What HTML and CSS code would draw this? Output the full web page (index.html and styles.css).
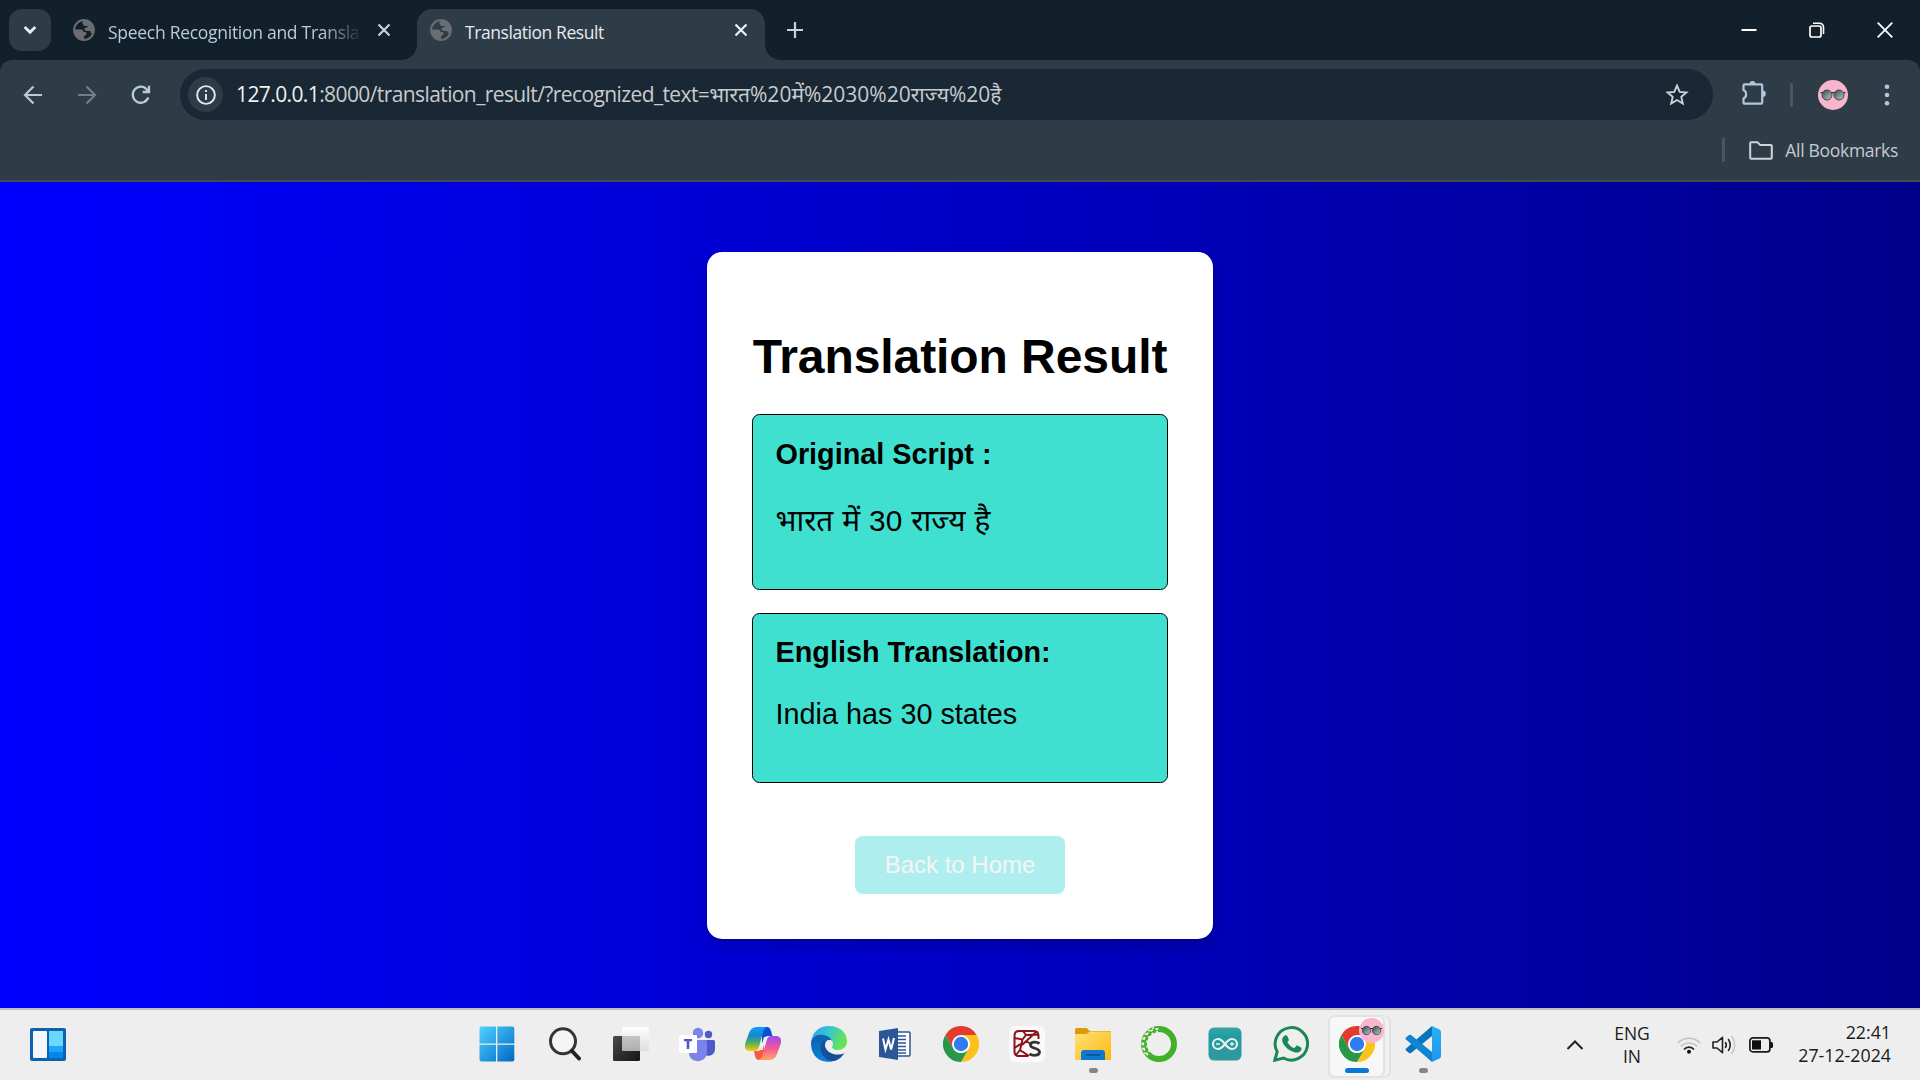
FILE: index.html
```html
<!DOCTYPE html>
<html lang="en">
<head>
<meta charset="utf-8">
<title>Translation Result</title>
<link rel="stylesheet" href="styles.css">
</head>
<body>
<svg class="defs" width="0" height="0" aria-hidden="true">
  <defs>
    <linearGradient id="win" x1="0" y1="0" x2="1" y2="1"><stop offset="0" stop-color="#4fd4ff"/><stop offset="1" stop-color="#0067c5"/></linearGradient>
    <linearGradient id="dark" x1="0" y1="0" x2="1" y2="1"><stop offset="0" stop-color="#4a4a4a"/><stop offset="1" stop-color="#151515"/></linearGradient>
    <linearGradient id="glass" x1="0" y1="0" x2="0" y2="1"><stop offset="0" stop-color="#fff" stop-opacity=".95"/><stop offset="1" stop-color="#ddd" stop-opacity=".85"/></linearGradient>
    <linearGradient id="copA" x1="0" y1="0" x2="0" y2="1"><stop offset="0" stop-color="#0aa0f5"/><stop offset=".35" stop-color="#1586d6"/><stop offset=".65" stop-color="#4cb060"/><stop offset="1" stop-color="#ffc800"/></linearGradient>
    <linearGradient id="copB" x1="0" y1="0" x2="0" y2="1"><stop offset="0" stop-color="#9b4df0"/><stop offset=".5" stop-color="#f2559a"/><stop offset="1" stop-color="#ffa860"/></linearGradient>
    <linearGradient id="edgeA" x1="0" y1="0" x2="1" y2=".3"><stop offset="0" stop-color="#2a9de8"/><stop offset=".5" stop-color="#35c5d5"/><stop offset="1" stop-color="#66e552"/></linearGradient>
    <linearGradient id="edgeB" x1="0" y1="0" x2="0" y2="1"><stop offset="0" stop-color="#0f5fa8"/><stop offset="1" stop-color="#0a84dc"/></linearGradient>
    <linearGradient id="fold" x1="0" y1="0" x2="1" y2="1"><stop offset="0" stop-color="#ffe27a"/><stop offset="1" stop-color="#fbb80e"/></linearGradient>
    <linearGradient id="ard" x1="0" y1="0" x2="0" y2="1"><stop offset="0" stop-color="#3aa5a8"/><stop offset=".3" stop-color="#1f9ba0"/><stop offset="1" stop-color="#32989d"/></linearGradient>
    <linearGradient id="lens" x1="0" y1="0" x2="1" y2="1"><stop offset="0" stop-color="#33464a"/><stop offset="1" stop-color="#b9cdcf"/></linearGradient>
    <linearGradient id="vs" x1="0" y1="0" x2="0" y2="1"><stop offset="0" stop-color="#27b0f5"/><stop offset="1" stop-color="#2196ee"/></linearGradient>
    <symbol id="globe" viewBox="0 0 22 22">
      <circle cx="11" cy="11" r="9.9" fill="none" stroke="#6b6d70" stroke-width="2"/>
      <path fill="#6b6d70" d="M12 1.2c5 0 9 4.400 8.800 9.800-.2 2-1 3-2 3.600-1.200-.3-1-2-2-2.600H12.800l-1.500-1.700c0-1 1-1.700 2.400-1.700 1 0 1.200-1 1-1.700h-3.400c-1-.5-1-2-2-2.500 0-1.200.6-2.500 2.700-3.200zM1.500 10.500h6.700c1.500.2 2.200 1 2.300 2.500h2c1.300.3 1.500 2 .5 2.800l-2 1.400v3.300C5.600 20.600 1.500 16.500 1.500 10.500z"/>
    </symbol>
    <symbol id="glasses" viewBox="0 0 30 30">
      <circle cx="15" cy="15" r="15" fill="#f9b5ce"/>
      <path d="M2.500 12.600h25M12.500 13.500q2.500-1.700 5 0" stroke="#333" stroke-width="1.300" fill="none"/>
      <circle cx="9" cy="15" r="5" fill="url(#lens)" stroke="#444" stroke-width="1"/>
      <circle cx="21" cy="15" r="5" fill="url(#lens)" stroke="#444" stroke-width="1"/>
    </symbol>
    <symbol id="chrome" viewBox="0 0 36 36">
      <path fill="#e33b2e" d="M2.400 9A18 18 0 0 1 33.600 9H18L10.200 22.500z"/>
      <path fill="#fcc21b" d="M33.600 9A18 18 0 0 1 18 36l7.800-13.500L18 9z"/>
      <path fill="#279847" d="M18 36A18 18 0 0 1 2.400 9l7.800 13.500A9 9 0 0 0 25.800 22.500z"/>
      <circle cx="18" cy="18" r="9" fill="#fff"/><circle cx="18" cy="18" r="7.200" fill="#2f7cf0"/>
    </symbol>
  </defs>
</svg>

<header class="browser">
  <div class="tabstrip">
    <button class="tab-search"><svg width="14" height="10" viewBox="0 0 14 10"><path d="M1.700 2L7 7.200 12.300 2" fill="none" stroke="#e9eef2" stroke-width="2.800"/></svg></button>
    <div class="tab">
      <svg class="favicon" width="22" height="22"><use href="#globe"/></svg>
      <span class="tab-title fade">Speech Recognition and Transla</span>
      <svg class="close" width="14" height="14" viewBox="0 0 14 14"><path d="M1.500 1.500l11 11m0-11l-11 11" stroke="#c3d4e0" stroke-width="2.200"/></svg>
    </div>
    <div class="tab active">
      <svg class="favicon" width="22" height="22"><use href="#globe"/></svg>
      <span class="tab-title">Translation Result</span>
      <svg class="close" width="14" height="14" viewBox="0 0 14 14"><path d="M1.500 1.500l11 11m0-11l-11 11" stroke="#f0f2f4" stroke-width="2.200"/></svg>
    </div>
    <svg class="new-tab" width="16" height="16" viewBox="0 0 16 16"><path d="M8 0v16M0 8h16" stroke="#c3d4e0" stroke-width="2.200"/></svg>
    <div class="window-controls">
      <svg width="16" height="16" viewBox="0 0 16 16"><path d="M.5 8h15" stroke="#fff" stroke-width="2"/></svg>
      <svg width="16" height="16" viewBox="0 0 16 16"><rect x="1" y="4" width="11" height="11" rx="2" fill="none" stroke="#fff" stroke-width="1.700"/><path d="M4 1.200h6.500a4 4 0 0 1 4 4V12" fill="none" stroke="#fff" stroke-width="1.600"/></svg>
      <svg width="16" height="16" viewBox="0 0 16 16"><path d="M.7.700l14.600 14.600m0-14.600L.7 15.300" stroke="#fff" stroke-width="1.800"/></svg>
    </div>
  </div>
  <div class="toolbar">
    <div class="nav">
      <svg width="20" height="20" viewBox="0 0 20 20"><path d="M19 10H2m8.500-8.500L2 10l8.500 8.500" fill="none" stroke="#b8cbd9" stroke-width="2.200"/></svg>
      <svg width="20" height="20" viewBox="0 0 20 20"><path d="M1 10h17M9.500 1.500L18 10l-8.500 8.500" fill="none" stroke="#6f7f8b" stroke-width="2.200"/></svg>
      <svg width="20" height="20" viewBox="0 0 20 20"><path d="M17.300 12.500A8 8 0 1 1 15.800 4.400L18 6.600M18 .8V7h-6.300" fill="none" stroke="#b8cbd9" stroke-width="2.300"/></svg>
    </div>
    <div class="omnibox">
      <span class="site-info"><svg width="20" height="20" viewBox="0 0 20 20"><circle cx="10" cy="10" r="8.900" fill="none" stroke="#e3e8ec" stroke-width="1.900"/><path d="M10 9v6M10 5v2" stroke="#e3e8ec" stroke-width="1.900"/></svg></span>
      <span class="url"><span class="host">127.0.0.1</span><span class="path">:8000/translation_result/?recognized_text=</span><span class="query">भारत%20में%2030%20राज्य%20है</span></span>
      <svg class="star" width="24" height="24" viewBox="0 0 24 24"><path d="M12 2.700l2.700 6.200 6.700.6-5.100 4.400 1.500 6.600-5.800-3.500-5.800 3.500 1.500-6.600-5.100-4.400 6.700-.6z" fill="none" stroke="#cdd2d6" stroke-width="1.900"/></svg>
    </div>
    <div class="actions">
      <svg class="puzzle" width="25" height="26" viewBox="0 0 25 26"><path fill="none" stroke="#b3c7dc" stroke-width="2.200" stroke-linejoin="round" d="M2.500 5.500q0-1.200 1.200-1.200H20q1.200 0 1.200 1.200v17q0 1.200-1.200 1.200H3.700q-1.200 0-1.200-1.200v-4.300c3.500-.8 3.500-7.200 0-8z"/><path fill="#b3c7dc" d="M8.500 4a3 3 0 0 1 6 0zM21.500 10.500a3.300 3.300 0 0 1 0 6.600z"/></svg>
      <i class="divider"></i>
      <svg class="avatar" width="30" height="30"><use href="#glasses"/></svg>
      <svg class="dots" width="6" height="22" viewBox="0 0 6 22"><g fill="#b3c7dc"><circle cx="3" cy="2.800" r="2.300"/><circle cx="3" cy="11" r="2.300"/><circle cx="3" cy="19.300" r="2.300"/></g></svg>
    </div>
  </div>
  <div class="bookmarks">
    <i class="divider"></i>
    <svg width="24" height="19" viewBox="0 0 24 19"><path d="M1.200 2.200q0-1 1-1h6.300l2.800 2.900h10.500q1 0 1 1V16.800q0 1-1 1H2.200q-1 0-1-1z" fill="none" stroke="#d0d3d6" stroke-width="2"/></svg>
    <span>All Bookmarks</span>
  </div>
</header>

<main class="page">
  <section class="card">
    <h1>Translation Result</h1>
    <div class="result original">
      <h2>Original Script :</h2>
      <p class="hindi">भारत में 30 राज्य है</p>
    </div>
    <div class="result english">
      <h2>English Translation:</h2>
      <p>India has 30 states</p>
    </div>
    <a class="home">Back to Home</a>
  </section>
</main>

<footer class="taskbar">
  <svg class="widgets" width="36" height="33" viewBox="0 0 36 33"><rect width="36" height="33" rx="2" fill="#0a62b0"/><rect x="3" y="3" width="14" height="27" rx="1" fill="#f4f6f9"/><path fill="#68d8ff" d="M19 3h14v15H19z"/><path fill="#1ba5fb" d="M19 18h14v6H19z"/><path fill="#0686ec" d="M19 24h14v6H19z"/></svg>
  <nav class="apps">
    <span class="app start"><svg width="36" height="36" viewBox="0 0 36 36"><path fill="url(#win)" d="M2.500.5H17v17H.5v-15a2 2 0 0 1 2-2zM18.300.5h15a2 2 0 0 1 2 2v15h-17zM.5 18.800H17v16.700H2.500a2 2 0 0 1-2-2zM18.300 18.800h17v14.700a2 2 0 0 1-2 2h-15z"/></svg></span>
    <span class="app"><svg width="36" height="36" viewBox="0 0 36 36"><circle cx="16" cy="15.300" r="12.500" fill="#f5f5f5" stroke="#353535" stroke-width="3"/><path d="M25 25l7 7.500" stroke="#222" stroke-width="4" stroke-linecap="round"/></svg></span>
    <span class="app"><svg width="36" height="36" viewBox="0 0 36 36"><rect y="10" width="27" height="25" rx="1.500" fill="url(#dark)"/><rect x="9" y="1" width="27" height="24" rx="1.500" fill="url(#glass)"/><path fill="#8c8c8c" opacity=".35" d="M9 10h18v15H9z"/></svg></span>
    <span class="app"><svg width="36" height="36" viewBox="0 0 36 36"><circle cx="29.500" cy="8.500" r="3.700" fill="#5059c9"/><path fill="#5059c9" d="M25 14h9.500q1.500 0 1.500 1.500V23c0 9-13 9-13 0z"/><circle cx="19" cy="7" r="5.200" fill="#7b83eb"/><path fill="#7b83eb" d="M10 14h16q2 0 2 2v10c0 12-18 12-18 1z"/><rect y="9" width="18" height="18" rx="1" fill="#fff"/><path fill="#5059c9" d="M5 13h8v2.300h-2.700V23H7.700v-7.700H5z"/></svg></span>
    <span class="app"><svg width="36" height="36" viewBox="0 0 36 36"><path fill="#0a50d2" d="M17 1h5q3 0 4 4l1.500 5H23q-3 0-4 3l-2 5z"/><path fill="#f65b42" d="M9 25h5l5-8v13l-2 4h-3q-3 0-4-4z"/><path fill="url(#copA)" d="M12 1h10q-3 1-4 5l-4 15q-1 4-5 4H5c-4 0-6-3-5-7L4 7q2-6 8-6z"/><path fill="url(#copB)" d="M24 34H13.500q3-1 4-5l4-14q1-5 5-5H31c4 0 6 3 5 7l-4 11q-2 6-8 6z"/><path fill="#eee" d="M19 11h4q-2 1-3 4l-2.500 9h-4q2-1 3-4z"/></svg></span>
    <span class="app"><svg width="36" height="36" viewBox="0 0 36 36"><path fill="url(#edgeA)" d="M0 17C1 6 8 0 18 0c11 0 18 7 18 15 0 6-4 9-10 9-4 0-6-1-5-3 2-3 0-8-4-8z"/><path fill="url(#edgeB)" d="M0 17C1 11 6 8 12 9c7 1 10 5 9 10-1-5-5-6-7-2-2 8 3 16 10 17.500-3 1.500-7 1.500-10 1C5 34 0 27 0 17z"/><path fill="#12509c" d="M11 16c-4 8 2 20 12 19 4-.6 8-4 10.500-8-8 4-18 0-19-6.500-.3-2 .3-4 1.500-5-2-1-4-.5-5 .5z"/><path fill="#eee" d="M14 19c0-3 2-5 4.500-5s4 2 3 5c-1.500 4 2 5 6 5.500 3 .3 5-.5 6-.3s1 1.500 0 2.300c-3 1.500-8 2-12 .5s-7.500-4.500-7.500-8z"/></svg></span>
    <span class="app"><svg width="36" height="36" viewBox="0 0 36 36"><rect x="19" y="6" width="14" height="24" rx="1" fill="#fff" stroke="#2b5797" stroke-width="1.500"/><path d="M20 10h9m-9 3.500h9m-9 3.500h9m-9 3.500h9m-9 3.500h9m-9 3h9" stroke="#2b5797" stroke-width="1.500"/><path fill="#2b5797" d="M2 5l19-3v32L2 31z"/><path d="M6 12.500l2.500 11 3-10 2.600 10L17 12" fill="none" stroke="#fff" stroke-width="2"/></svg></span>
    <span class="app"><svg width="36" height="36"><use href="#chrome"/></svg></span>
    <span class="app"><svg width="36" height="36" viewBox="0 0 36 36"><rect width="36" height="36" rx="6" fill="#fafafa"/><path d="M19 30H10q-4.500 0-4.500-4.500V10Q5.500 5 10 5h15q4.500 0 4.500 5v3M5.500 12l8 1.500L17 9l12-.5M17 9l-3-4M13.500 13.500L11 24l9 6M5.500 22l6-4M11 24l-4 5M13 19l14-13M17 15l5 3" fill="none" stroke="#8b1219" stroke-width="2"/><path d="M30.500 17.500c-3-2-9-2-9 1.500 0 4 9 2.500 9 7 0 4-7 4-10 1.800" fill="none" stroke="#333" stroke-width="2.800"/></svg></span>
    <span class="app running"><svg width="36" height="36" viewBox="0 0 36 36"><path fill="#dc9a08" d="M1.500 2h10L15 5h20q1 0 1 1v6H0V3.500Q0 2 1.500 2z"/><path fill="url(#fold)" d="M0 8h11.500L15 5.500h20q1 0 1 1V34H0z"/><path fill="#0b79cd" d="M6 34v-7q0-3 3-3h18q3 0 3 3v7z"/><path d="M11 29h14" stroke="#07549c" stroke-width="2"/></svg></span>
    <span class="app"><svg width="36" height="36" viewBox="0 0 36 36"><circle cx="18" cy="18" r="15" fill="none" stroke="#43b02a" stroke-width="6"/><g fill="none" stroke="#eee"><path d="M7 29A15 15 0 0 1 18 3" stroke-width="2" stroke-dasharray="3 2.500"/><path d="M4.500 28A17 17 0 0 1 15 1.300M8.500 26A12.500 12.500 0 0 1 17 5.500" stroke-width="1.400" stroke-dasharray="2 3"/></g></svg></span>
    <span class="app"><svg width="36" height="36" viewBox="0 0 36 36"><rect x="1.500" y="1.500" width="33" height="33" rx="5.500" fill="url(#ard)"/><path d="M18 18c-3-4-5-5-7-5a5 5 0 0 0 0 10c2 0 4-1 7-5s5-5 7-5a5 5 0 0 1 0 10c-2 0-4-1-7-5z" fill="none" stroke="#e8efef" stroke-width="2.200"/><path d="M9 18h4M23 18h4m-2-2v4" stroke="#e8efef" stroke-width="1.300"/></svg></span>
    <span class="app"><svg width="36" height="36" viewBox="0 0 36 36"><path d="M1.800 34.200l2.400-8.500A16.200 16.200 0 1 1 10.500 32z" fill="none" stroke="#1b8755" stroke-width="3"/><path fill="#1b8755" d="M12 9.500c1-.5 2-.3 2.400.7l1.400 3.200c.3.800-.8 2-1.500 2.700 1.700 3 3.800 5 6.900 6.200l2-2.300c.4-.5 1-.5 1.500-.2l3.300 1.600c1 .5.3 2.500-.2 3.300-1.500 2-4.500 2.300-7 1.300C15 24 11.500 20.500 9.500 16c-1-2.500-.2-5 2.500-6.500z"/></svg></span>
    <span class="app current"><svg width="36" height="36"><use href="#chrome"/></svg><svg class="badge" width="25" height="25"><use href="#glasses"/></svg></span>
    <span class="app running"><svg width="36" height="36" viewBox="0 0 36 36"><path fill="#0a74bb" d="M27 0v10L6 27q-1 .7-2 0l-3-2.500q-1-1 0-2z"/><path fill="#0d85d3" d="M27 36V26L6 9q-1-.7-2 0l-3 2.500q-1 1 0 2z"/><path fill="url(#vs)" d="M27 0l7.500 3.500Q36 4.200 36 6v24q0 1.800-1.500 2.500L27 36z"/></svg></span>
  </nav>
  <div class="tray">
    <svg class="chevron" width="18" height="12" viewBox="0 0 18 12"><path d="M1.500 10L9 2.500l7.500 7.500" fill="none" stroke="#222" stroke-width="2"/></svg>
    <div class="lang"><span>ENG</span><span>IN</span></div>
    <svg class="wifi" width="24" height="18" viewBox="0 0 24 18"><g fill="none" stroke-width="1.500"><path d="M.8 7a15.500 15.500 0 0 1 22.400 0M4 10.500a11 11 0 0 1 16 0" stroke="#c2c2c2"/><path d="M7 13.500a6.500 6.500 0 0 1 10 0" stroke="#222" stroke-width="1.700"/></g><circle cx="12" cy="15.700" r="2" fill="#111"/></svg>
    <svg class="sound" width="25" height="20" viewBox="0 0 25 20"><path d="M1 7v6h4l5.500 4.700V2.300L5 7z" fill="none" stroke="#222" stroke-width="1.600" stroke-linejoin="round"/><path d="M13.300 7q2 3 0 6M16.200 4q4 6 0 12" fill="none" stroke="#222" stroke-width="1.600"/><path d="M19.500 1q6.500 9 0 18" fill="none" stroke="#c6c6c6" stroke-width="1.500"/></svg>
    <svg class="battery" width="24" height="16" viewBox="0 0 24 16"><rect x=".9" y=".9" width="20" height="14" rx="3" fill="none" stroke="#1a1a1a" stroke-width="1.700"/><rect x="3" y="3.300" width="9" height="9.200" fill="#111"/><path d="M21 5h1.500q1.500 0 1.500 1.500v3q0 1.500-1.500 1.500H21z" fill="#111"/></svg>
    <div class="clock"><span>22:41</span><span>27-12-2024</span></div>
  </div>
</footer>
</body>
</html>
```

FILE: styles.css
```css
* { box-sizing: border-box; }
body {
  margin: 0;
  width: 1920px;
  height: 1080px;
  overflow: hidden;
  display: flex;
  flex-direction: column;
  font-family: "Open Sans", "Noto Sans", sans-serif;
}
svg { display: block; flex: none; }
.defs { position: absolute; }

/* Browser window */
.browser { height: 182px; background: #12202c; flex: none; display: flex; flex-direction: column; }
.tabstrip { height: 60px; flex: none; display: flex; align-items: center; padding-left: 9px; }
.tab-search { width: 42px; height: 42px; border: 0; border-radius: 13px; background: #2e3c48; padding: 0; display: grid; place-items: center; }
.tab { height: 51px; margin-top: 9px; padding-bottom: 9px; display: flex; align-items: center; color: #b8cbd9; }
.tab:not(.active) { width: 366px; padding-left: 22px; }
.active { width: 348px; padding-left: 13px; background: #2e3c48; border-radius: 15px 15px 0 0; color: #e6eaed; position: relative; }
.active::before, .active::after { content: ""; position: absolute; bottom: 0; width: 15px; height: 15px; }
.active::before { left: -15px; background: radial-gradient(circle at 0 0, #12202c 14.5px, #2e3c48 15px); }
.active::after { right: -15px; background: radial-gradient(circle at 100% 0, #12202c 14.5px, #2e3c48 15px); }
.tab-title { width: 252px; margin-left: 13px; padding-top: 3px; font-size: 17.5px; line-height: 24px; letter-spacing: -0.28px; white-space: nowrap; overflow: hidden; }
.active .tab-title { width: 263px; letter-spacing: -0.43px; }
.fade { -webkit-mask-image: linear-gradient(to right, #000 85%, transparent 101%); mask-image: linear-gradient(to right, #000 85%, transparent 101%); }
.close { margin-left: 17px; }
.active .close { margin-left: 6px; }
.new-tab { margin-left: 22px; }
.window-controls { margin-left: auto; display: flex; gap: 52px; padding-right: 27px; }

.toolbar { height: 69px; flex: none; display: flex; align-items: center; background: #2e3c48; border-radius: 12px 12px 0 0; padding-left: 23px; }
.nav { display: flex; gap: 34px; width: 157px; }
.omnibox { width: 1533px; height: 51px; border-radius: 26px; background: #192834; display: flex; align-items: center; padding-left: 8px; }
.site-info { width: 35px; height: 35px; border-radius: 50%; background: #2e3c48; display: grid; place-items: center; }
.url { margin-left: 13px; padding-bottom: 2px; font-size: 21px; line-height: 30px; white-space: nowrap; color: #c7cbce; display: flex; }
.host, .path { letter-spacing: -0.6px; }
.host { color: #eef1f3; }
.star { margin-left: auto; margin-right: 24px; }
.actions { display: flex; align-items: center; margin-left: 28px; }
.divider { width: 3px; height: 24px; border-radius: 1px; background: #465866; }
.puzzle { margin-top: -4px; }
.actions .divider { margin-left: 24px; }
.avatar { margin-left: 25px; }
.dots { margin-left: 36px; }
.bookmarks { flex: 1; display: flex; align-items: center; justify-content: flex-end; padding: 0 22px 9px 0; background: #2e3c48; border-bottom: 2px solid #474a4c; color: #c7cbce; font-size: 17.5px; line-height: 24px; letter-spacing: -0.3px; }
.bookmarks svg { margin: 0 12px 0 24px; }
.bookmarks span { padding-bottom: 1px; }

/* Web page */
.page { flex: 1; display: flex; justify-content: center; padding-top: 70px; background: linear-gradient(to right, #0000ff, #00008b); font-family: "Liberation Sans", "Noto Sans", sans-serif; }
.card { width: 506px; height: 687px; padding: 45px; border-radius: 15px; background: #fff; box-shadow: 0 6px 12px rgba(0, 0, 0, 0.2); display: flex; flex-direction: column; align-items: center; }
h1 { margin: 32px 0 30px; font-size: 48px; line-height: 55px; letter-spacing: -0.08px; white-space: nowrap; }
.result { width: 416px; padding: 22px 22.5px; border: 1px solid #000; border-radius: 7.5px; background: #40e0d0; }
.original { height: 176px; margin-bottom: 23px; padding-top: 23px; }
.english { height: 170px; }
h2, .result p { margin: 0; font-size: 28.8px; line-height: 33px; white-space: nowrap; }
.result p { margin-top: 29px; }
.result .hindi { margin-top: 33px; font-size: 29.8px; word-spacing: 0.7px; }
.home { margin-top: 53px; width: 210px; height: 58px; border-radius: 7.5px; background: #afeeee; color: #f5f5f5; font-size: 24px; line-height: 57px; text-align: center; }

/* Taskbar */
.taskbar { height: 72px; flex: none; border-top: 2px solid #bdbdbd; background: #eee; display: flex; align-items: center; color: #1b1b1b; }
.widgets { margin-left: 30px; margin-top: -2px; }
.apps { display: flex; margin-left: 398px; }
.app { width: 66px; height: 60px; display: grid; place-items: center; position: relative; }
.start { margin-right: 2px; }
.app > svg { position: relative; top: -1px; }
.running::after, .current::after { content: ""; position: absolute; left: 28.5px; bottom: 2px; width: 9px; height: 5px; border-radius: 3px; background: #858585; }
.current::after { left: 21px; width: 24px; background: #0b78d4; }
.current::before { content: ""; position: absolute; left: 4px; top: 0; width: 53px; height: 59px; background: #f7f7f7; border: 2px solid #e2e2e2; border-radius: 7px; box-shadow: 5px 0 0 -1px #f1f1f1, 6px 0 0 #e2e2e2; }
.app > svg.badge { position: absolute; left: 35px; top: 3px; }
.tray { display: flex; align-items: center; margin-left: auto; padding-right: 29px; font-size: 17.5px; line-height: 23px; }
.lang, .clock { display: flex; flex-direction: column; white-space: nowrap; }
.lang { align-items: center; width: 40px; margin-left: 28px; padding-bottom: 1px; }
.wifi { margin-left: 25px; }
.sound { margin-left: 11px; }
.battery { margin-left: 12px; }
.clock { align-items: flex-end; width: 118px; padding-bottom: 2px; font-size: 17.8px; }
```
